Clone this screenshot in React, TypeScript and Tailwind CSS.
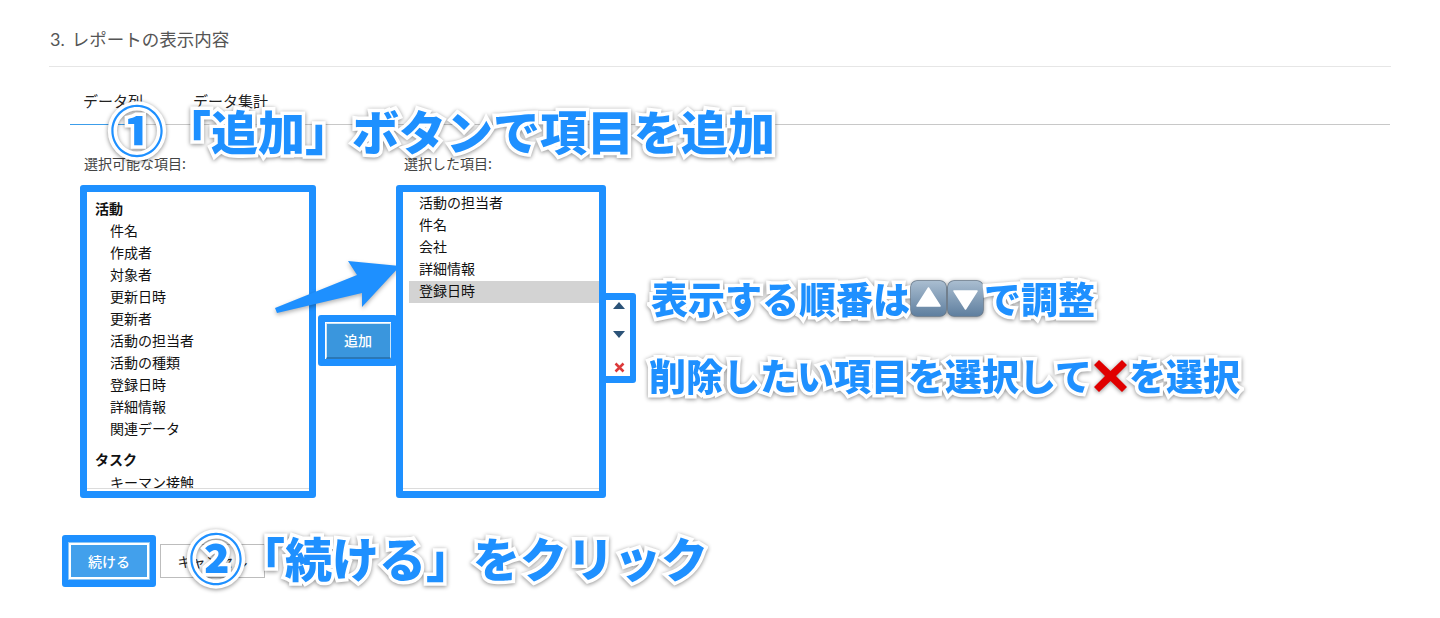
import React from 'react';

const blueBox = 'border-[7px] border-[#1e90ff] rounded-[3px]';
const callout =
  "absolute whitespace-nowrap font-extrabold text-[#1e90ff] [-webkit-text-stroke:7px_white] [paint-order:stroke_fill] [filter:drop-shadow(0_1px_2px_rgba(0,0,0,0.45))]";

const activityItems = ['件名', '作成者', '対象者', '更新日時', '更新者', '活動の担当者', '活動の種類', '登録日時', '詳細情報', '関連データ'];
const selectedItems = ['活動の担当者', '件名', '会社', '詳細情報', '登録日時'];

function EmojiArrow({ down }: { down?: boolean }) {
  return (
    <svg width="37" height="37" viewBox="0 0 37 37" className="shrink-0">
      <defs>
        <linearGradient id={down ? 'emojiDown' : 'emojiUp'} x1="0" y1="0" x2="0" y2="1">
          <stop offset="0" stopColor="#a9bdd0" />
          <stop offset="1" stopColor="#5f7f9f" />
        </linearGradient>
      </defs>
      <rect x="1" y="1" width="35" height="35" rx="6" fill={`url(#${down ? 'emojiDown' : 'emojiUp'})`} stroke="#66788a" strokeWidth="1.5" />
      <path d={down ? 'M7 11H30L18.500 29Z' : 'M18.500 8L30 26H7Z'} fill="#fff" stroke="#fff" strokeLinejoin="round" strokeWidth="1.500" />
    </svg>
  );
}

export default function App() {
  return (
    <div className="relative w-[1440px] h-[618px] overflow-hidden bg-white text-[14px] text-[#222] font-['Noto_Sans_CJK_JP','Noto_Sans',sans-serif]">
      {/* Section heading */}
      <div className="mx-[49px] h-[67px] pt-[12px] border-b border-[#e6e6e6] flex items-center gap-[7px] text-[#555]">
        <span className="text-[18px] leading-[24px] ml-px font-['Lato',sans-serif]">3.</span>
        <span className="text-[17.500px] leading-[24px]">レポートの表示内容</span>
      </div>

      {/* Tabs */}
      <div className="ml-[70px] mr-[50px] h-[58px] border-b border-[#c8c8c8] flex items-end relative">
        <div className="w-[55px] absolute left-0 -bottom-px h-px bg-[#3c9dea]" />
        <span className="ml-[13px] mb-[12px] text-[15px] leading-[22px]">データ列</span>
        <span className="ml-[50px] mb-[12px] text-[15px] leading-[22px]">データ集計</span>
      </div>

      {/* Column pickers */}
      <div className="flex ml-[80px] mt-[27px] text-[#444] leading-[22px]">
        <span className="ml-[4px] w-[316px]">選択可能な項目:</span>
        <span className="ml-[4px]">選択した項目:</span>
      </div>

      <div className="flex ml-[80px] mt-[11px] items-start">
        <div className={`${blueBox} w-[236px] h-[313px] overflow-hidden bg-white`}>
          <div className="relative h-full pl-[8px] pt-[6px] leading-[22px] text-[#111]">
            <div className="font-bold"><span className="relative -top-px">活動</span></div>
            {activityItems.map((item) => (
              <div key={item} className="pl-[15px]"><span className="relative -top-px">{item}</span></div>
            ))}
            <div className="font-bold mt-[9px]"><span className="relative -top-px">タスク</span></div>
            <div className="pl-[15px] mt-px"><span className="relative -top-px">キーマン接触</span></div>
            <div className="absolute left-0 right-0 bottom-0 h-[3px] bg-white border-t border-[#dcdcdc]" />
          </div>
        </div>

        <div className={`${blueBox} ml-[2px] mt-[130px] w-[79px] h-[51px] -mr-px flex items-center justify-center border-r-[6px] bg-white z-10`}>
          <button className="w-[65px] h-[36px] bg-[#3a96dd] border border-[#cfe6f8] border-b-2 border-b-[#2a77b5] text-white text-[14px] font-medium">追加</button>
        </div>

        <div className={`${blueBox} w-[210px] h-[313px] overflow-hidden bg-white z-20`}>
          <div className="relative h-full pl-[6px] pt-px leading-[22px] text-[#111]">
            {selectedItems.map((item, i) => (
              <div key={item} className={`pl-[10px] ${i === 4 ? 'bg-[#d3d3d3]' : ''}`}><span className="relative -top-[2px]">{item}</span></div>
            ))}
            <div className="absolute left-0 right-0 bottom-0 h-[3px] bg-white border-t border-[#dcdcdc]" />
          </div>
        </div>

        <div className="ml-0 mt-[108px] w-[30px] h-[90px] bg-[#1e90ff] rounded-r-[3px] pr-[6px] pt-[7px] pb-[7px]">
          <div className="h-full bg-white flex flex-col items-center pt-[2px] pl-[2px]">
            <svg width="12" height="7" viewBox="0 0 12 7"><path d="M6 0L12 7H0Z" fill="#2c5378" /></svg>
            <svg width="12" height="7" viewBox="0 0 12 7" className="mt-[22px]"><path d="M0 0H12L6 7Z" fill="#2c5378" /></svg>
            <svg width="11" height="11" viewBox="0 0 11 11" className="mt-[24px]"><path d="M1.500 1.500L9.500 9.500M9.500 1.500L1.500 9.500" stroke="#dc3a3a" strokeWidth="2.500" /></svg>
          </div>
        </div>
      </div>

      {/* Form buttons */}
      <div className="flex items-center ml-[62px] mt-[37px]">
        <div className={`${blueBox} w-[94px] h-[52px] flex items-center justify-center`}>
          <button className="w-[80px] h-[36px] bg-[#42a0ec] border-2 border-white outline outline-1 outline-[#8cc6f5] text-white text-[14px] font-medium">続ける</button>
        </div>
        <button className="ml-[4px] w-[105px] h-[34px] bg-white border border-[#bdbdbd] text-[#222] text-[14px]">キャンセル</button>
      </div>

      {/* Annotations */}
      <svg className="absolute left-0 top-0 [filter:drop-shadow(0_2px_2px_rgba(0,0,0,0.3))]" width="1440" height="618">
        <path d="M275 308L357 275L348 261L400 266L362 307L362 293L277 313Z" fill="#1e90ff" />
      </svg>

      <div className={`${callout} left-[110px] top-[91px] text-[54px] leading-[76px]`}>①</div>
      <div className={`${callout} left-[164px] top-[96px] text-[47px] leading-[68px]`}>「追加」ボタンで項目を追加</div>

      <div className={`${callout} left-[651px] top-[271px] text-[37px] leading-[54px] flex items-center`}>
        <span>表示する順番は</span>
        <EmojiArrow />
        <EmojiArrow down />
        <span>で調整</span>
      </div>

      <div className={`${callout} left-[649px] top-[348px] text-[37px] leading-[54px] flex items-center`}>
        <span>削除したい項目を選択して</span>
        <svg width="37" height="37" viewBox="0 0 37 37" className="shrink-0">
          <path d="M7 3L18.500 14L30 3L35 8L24 19L35 30L30 35L18.500 24L7 35L2 30L13 19L2 8Z" fill="#e00000" />
        </svg>
        <span>を選択</span>
      </div>

      <div className={`${callout} left-[189px] top-[519px] text-[54px] leading-[76px]`}>②</div>
      <div className={`${callout} left-[238px] top-[523px] text-[47px] leading-[68px]`}>「続ける」をクリック</div>
    </div>
  );
}
